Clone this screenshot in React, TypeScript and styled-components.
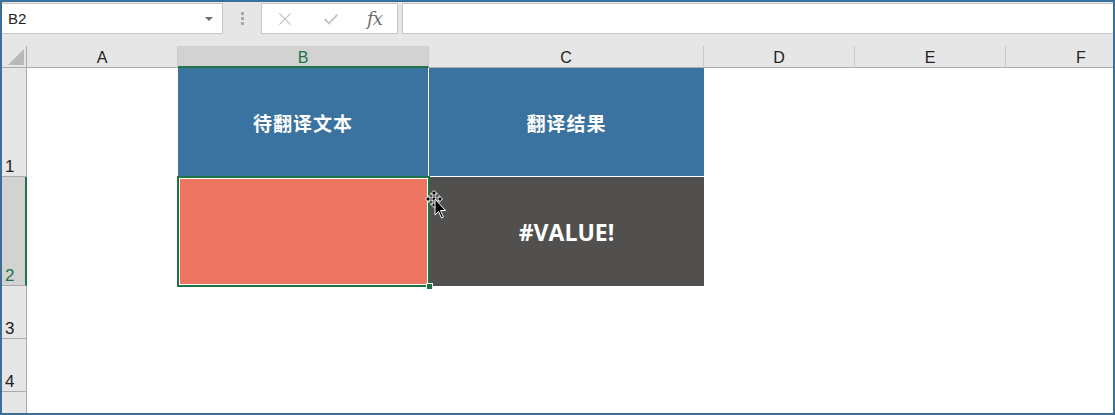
import React from 'react'
import styled, { createGlobalStyle } from 'styled-components'

const Global = createGlobalStyle`
  html, body { margin: 0; padding: 0; background: #fff; }
  * { box-sizing: border-box; }
`

const GREEN = '#217346'

const cols = ['A', 'B', 'C', 'D', 'E', 'F']
// the fifth row is cut by the window edge, so its number never shows
const rows = ['1', '2', '3', '4', '']

const App = () => {
  return (
    <Frame>
      <Global />
      <FormulaBar>
        <NameBox>
          <span>B2</span>
          <Caret />
        </NameBox>
        <Grip>
          <i /><i /><i />
        </Grip>
        <ButtonGroup>
          <ToolIcon viewBox="0 0 20 20">
            <path d="M3 3 L17 17 M17 3 L3 17" stroke="#c4c4c4" strokeWidth="1.6" fill="none" />
          </ToolIcon>
          <ToolIcon viewBox="0 0 20 20">
            <path d="M2 10 L7.5 15.5 L18 4.5" stroke="#c4c4c4" strokeWidth="2.4" fill="none" />
          </ToolIcon>
          <Fx>fx</Fx>
        </ButtonGroup>
        <FormulaInput />
      </FormulaBar>

      <Sheet>
        <Corner>
          <svg width="16" height="16" viewBox="0 0 16 16">
            <polygon points="16,0 16,16 0,16" fill="#b7b7b7" />
          </svg>
        </Corner>
        {cols.map((c) => (
          <ColHead key={c} $active={c === 'B'}>{c}</ColHead>
        ))}

        {rows.map((r, i) => (
          <React.Fragment key={i}>
            <RowHead $active={r === '2'}>{r}</RowHead>
            {cols.map((c) => {
              if (r === '1' && c === 'B') return <Cell key={c} $bg="#3a72a0" $rightLine>待翻译文本</Cell>
              if (r === '1' && c === 'C') return <Cell key={c} $bg="#3a72a0" $bottomLine>翻译结果</Cell>
              if (r === '2' && c === 'B')
                return (
                  <Selected key={c}>
                    <Handle />
                  </Selected>
                )
              if (r === '2' && c === 'C') return <Cell key={c} $bg="#52504e" $latin>#VALUE!</Cell>
              return <Cell key={c} />
            })}
          </React.Fragment>
        ))}
      </Sheet>

      <Pointer width="24" height="30" viewBox="0 0 24 30">
        <g fill="#000" stroke="#fff" strokeWidth="1">
          <path d="M9 0.5 L12.5 4 L10 4 L10 8 L14 8 L14 5.5 L17.5 9 L14 12.5 L14 10 L10 10 L10 14 L12.5 14 L9 17.5 L5.5 14 L8 14 L8 10 L4 10 L4 12.5 L0.5 9 L4 5.5 L4 8 L8 8 L8 4 L5.5 4 Z" />
          <path d="M10 9 L10 25 L13.5 21.5 L16.5 28 L18.5 27 L15.5 20.5 L20.5 20.5 Z" />
        </g>
      </Pointer>
    </Frame>
  )
}

export default App

const Frame = styled.div`
  position: relative;
  width: 1115px;
  height: 415px;
  border: 2px solid #3b6f9b;
  background: #e6e6e6;
  display: flex;
  flex-direction: column;
  overflow: hidden;
  font-family: 'Liberation Sans', Arial, sans-serif;
`

const FormulaBar = styled.div`
  height: 44px;
  flex: none;
  display: flex;
  align-items: flex-start;
  padding-top: 1px;
  background: #e6e6e6;
`

const NameBox = styled.div`
  width: 221px;
  height: 31px;
  background: #fff;
  border: 1px solid #c6c6c6;
  border-left: none;
  display: flex;
  align-items: center;
  justify-content: space-between;
  padding: 0 9px 0 6px;
  font-size: 15px;
  color: #222;
`

const Caret = styled.span`
  width: 0;
  height: 0;
  border-left: 4px solid transparent;
  border-right: 4px solid transparent;
  border-top: 4px solid #6d6d6d;
`

const Grip = styled.div`
  width: 38px;
  height: 31px;
  display: flex;
  flex-direction: column;
  align-items: center;
  justify-content: center;
  gap: 2px;

  i {
    display: block;
    width: 3px;
    height: 3px;
    background: #a8a8a8;
  }
`

const ButtonGroup = styled.div`
  width: 137px;
  height: 31px;
  background: #fff;
  border: 1px solid #c6c6c6;
  display: flex;
  align-items: center;
  gap: 30px;
  padding-left: 15px;
`

const ToolIcon = styled.svg`
  width: 16px;
  height: 16px;
`

const Fx = styled.span`
  font-family: 'DejaVu Serif', 'Liberation Serif', serif;
  font-style: italic;
  font-size: 18px;
  color: #6f6f6f;
  line-height: 1;
  letter-spacing: -1px;
  margin-left: -2px;
`

const FormulaInput = styled.div`
  flex: 1;
  height: 31px;
  margin-left: 4px;
  background: #fff;
  border: 1px solid #c6c6c6;
  border-right: none;
`

const Sheet = styled.div`
  flex: 1;
  display: grid;
  grid-template-columns: 25px 151px 251px 275px 151px 151px 151px;
  grid-template-rows: 22px 109px 109px 53px 53px 53px;
  background: #fff;
  overflow: hidden;
`

const Corner = styled.div`
  background: #e6e6e6;
  border-right: 1px solid #ababab;
  border-bottom: 1px solid #ababab;
  display: flex;
  align-items: flex-end;
  justify-content: flex-end;
  padding: 0 2px 2px 0;
`

const ColHead = styled.div<{ $active?: boolean }>`
  background: ${(p) => (p.$active ? '#d2d2d2' : '#e6e6e6')};
  color: ${(p) => (p.$active ? GREEN : '#222')};
  border-right: 1px solid #c9c9c9;
  border-bottom: ${(p) => (p.$active ? `2px solid ${GREEN}` : '1px solid #ababab')};
  display: flex;
  align-items: center;
  justify-content: center;
  font-size: 16px;
  padding-top: ${(p) => (p.$active ? '4px' : '3px')};
`

const RowHead = styled.div<{ $active?: boolean }>`
  background: ${(p) => (p.$active ? '#d2d2d2' : '#e6e6e6')};
  color: ${(p) => (p.$active ? GREEN : '#222')};
  border-right: ${(p) => (p.$active ? `2px solid ${GREEN}` : '1px solid #ababab')};
  border-bottom: 1px solid #ababab;
  display: flex;
  align-items: flex-end;
  padding: 0 0 0 3px;
  font-size: 17px;
  line-height: 19px;
`

const Cell = styled.div<{ $bg?: string; $latin?: boolean; $rightLine?: boolean; $bottomLine?: boolean }>`
  background: ${(p) => p.$bg || '#fff'};
  color: #fff;
  display: flex;
  align-items: center;
  justify-content: center;
  font-family: ${(p) =>
    p.$latin ? "'Open Sans', 'Liberation Sans', sans-serif" : "'Noto Sans CJK SC', sans-serif"};
  font-weight: 700;
  font-size: ${(p) => (p.$latin ? '23px' : '19px')};
  letter-spacing: ${(p) => (p.$latin ? '0' : '1px')};
  padding-top: ${(p) => (p.$latin ? '1px' : '0')};
  border-right: ${(p) => (p.$rightLine ? '1px solid #fff' : 'none')};
  border-bottom: ${(p) => (p.$bottomLine ? '1px solid #fff' : 'none')};
`

const Selected = styled.div`
  position: relative;
  background: #ed7662;
  border: 2px solid ${GREEN};
  box-shadow: inset 0 0 0 1px #fff;
  margin: -1px -1px -1px -1px;
  z-index: 1;
`

const Handle = styled.span`
  position: absolute;
  right: -5px;
  bottom: -5px;
  width: 7px;
  height: 7px;
  background: ${GREEN};
  border: 1px solid #fff;
`

const Pointer = styled.svg`
  position: absolute;
  left: 423px;
  top: 188px;
  z-index: 3;
`
